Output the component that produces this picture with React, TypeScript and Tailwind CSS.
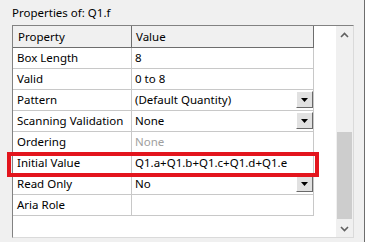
import React from 'react';

type Row = {
  name: string;
  value: string;
  muted?: boolean;
  dropdown?: boolean;
  highlight?: boolean;
};

const rows: Row[] = [
  { name: 'Box Length', value: '8' },
  { name: 'Valid', value: '0 to 8' },
  { name: 'Pattern', value: '(Default Quantity)', dropdown: true },
  { name: 'Scanning Validation', value: 'None', dropdown: true },
  { name: 'Ordering', value: 'None', muted: true },
  { name: 'Initial Value', value: 'Q1.a+Q1.b+Q1.c+Q1.d+Q1.e', highlight: true },
  { name: 'Read Only', value: 'No', dropdown: true },
  { name: 'Aria Role', value: '' },
];

function DropButton() {
  return (
    <div className="absolute right-0 top-[1px] w-[17px] h-[17px] bg-[#e1e1e1] border-t border-l border-t-white border-l-white border-r border-b border-r-[#696969] border-b-[#696969] flex items-center justify-center">
      <svg width="7" height="4" viewBox="0 0 7 4">
        <path d="M0 0h7L3.5 4z" fill="#000" />
      </svg>
    </div>
  );
}

function Chevron({ up }: { up?: boolean }) {
  return (
    <div className="h-[17px] flex items-center justify-center">
      <svg width="9" height="6" viewBox="0 0 9 6">
        <path
          d={up ? 'M1 5l3.5-3.5L8 5' : 'M1 1l3.5 3.5L8 1'}
          fill="none"
          stroke="#606060"
          strokeWidth="1.6"
        />
      </svg>
    </div>
  );
}

export default function App() {
  return (
    <div
      className="w-[365px] h-[242px] bg-[#f0f0f0] flex overflow-hidden text-black"
      style={{ fontFamily: '"Noto Sans", "Liberation Sans", sans-serif' }}
    >
      <div className="w-[364px] flex flex-col">
        <div className="h-[25px] pl-[12px] pt-[5px] text-[11.5px] leading-[16px]">Properties of: Q1.f</div>
        <div className="ml-[12px] w-[342px] h-[213px] border border-t-[#828282] border-l-[#828282] border-r-[#dadada] border-b-[#dadada] flex">
          <div className="flex-1 bg-white">
            <div className="w-[301px] text-[11.5px]">
              <div className="flex h-[22px] bg-[#f0f0f0] border-b border-[#6d6d6d]">
                <div className="w-[119px] border-r border-[#6d6d6d] pl-[5px] flex items-center">Property</div>
                <div className="w-[182px] border-r border-[#6d6d6d] pl-[4px] flex items-center">Value</div>
              </div>
              {rows.map((r) => (
                <div key={r.name} className="relative flex h-[21px] border-b border-[#c8c8c8]">
                  <div className="w-[119px] border-r border-[#c8c8c8] pl-[4px] flex items-center whitespace-nowrap">
                    {r.name}
                  </div>
                  <div
                    className={`relative w-[182px] border-r border-[#c8c8c8] pl-[3px] flex items-center whitespace-nowrap ${
                      r.muted ? 'text-[#a0a0a0]' : ''
                    }`}
                  >
                    {r.value}
                    {r.dropdown && <DropButton />}
                  </div>
                  {r.highlight && (
                    <div className="absolute left-[-6px] right-[-5px] top-[-1px] bottom-[-4px] border-[4px] border-[#e3151d] z-10" />
                  )}
                </div>
              ))}
            </div>
          </div>
          <div className="w-[17px] bg-[#f0f0f0] flex flex-col">
            <Chevron up />
            <div className="flex-1">
              <div className="mt-[89px] mx-[1px] h-[87px] bg-[#cdcdcd]" />
            </div>
            <Chevron />
          </div>
        </div>
      </div>
      <div className="w-[1px] bg-[#6d6d6d]" />
    </div>
  );
}
